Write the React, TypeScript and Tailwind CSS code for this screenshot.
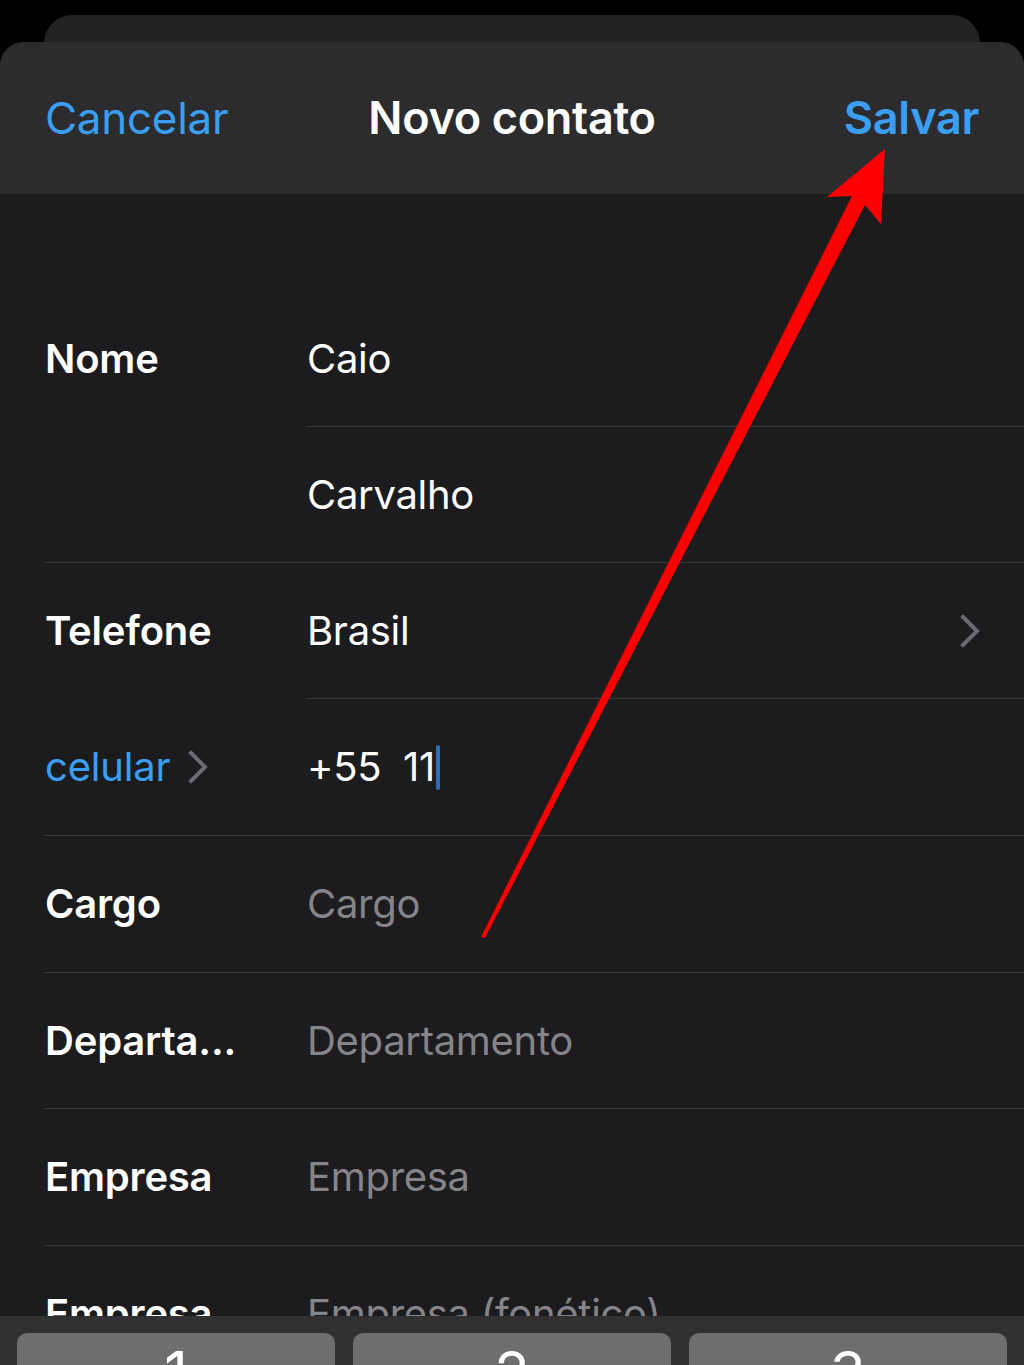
import React from "react";

const font = { fontFamily: "Inter, 'Noto Sans', sans-serif" };

function Chevron({ className }: { className?: string }) {
  return (
    <svg className={className} viewBox="0 0 20 34" fill="none">
      <path d="M3 3 L17 17 L3 31" stroke="#6c6c70" strokeWidth="4" strokeLinecap="square" strokeLinejoin="miter" />
    </svg>
  );
}

type Row = {
  h: string;
  label?: React.ReactNode;
  value: React.ReactNode;
  last?: boolean;
  right?: React.ReactNode;
};

export default function App() {
  const rows: Row[] = [
    { h: "h-[136px]", label: "Nome", value: <span className="text-white">Caio</span> },
    { h: "h-[136px]", value: <span className="text-white">Carvalho</span>, last: true },
    {
      h: "h-[136px]",
      label: "Telefone",
      value: <span className="text-white">Brasil</span>,
      right: <Chevron className="w-[20px] h-[34px] mr-[44px]" />,
    },
    {
      h: "h-[137px]",
      label: (
        <span className="flex items-center gap-[18px] font-normal text-[#3a9ff2]">
          celular
          <Chevron className="w-[20px] h-[34px]" />
        </span>
      ),
      value: (
        <span className="flex items-center text-white whitespace-pre">
          {"+55  11"}
          <span className="inline-block w-[4px] h-[45px] rounded-full bg-[#2f6cb5] ml-[1px]" />
        </span>
      ),
      last: true,
    },
    { h: "h-[137px]", label: "Cargo", value: <span className="text-[#858589]">Cargo</span>, last: true },
    { h: "h-[136px]", label: "Departa...", value: <span className="text-[#858589]">Departamento</span>, last: true },
    { h: "h-[137px]", label: "Empresa", value: <span className="text-[#858589]">Empresa</span>, last: true },
    { h: "h-[136px]", label: "Empresa", value: <span className="text-[#858589]">Empresa (fonético)</span>, last: true },
  ];

  return (
    <div className="relative w-[1024px] h-[1365px] overflow-hidden bg-black flex flex-col" style={font}>
      <div className="pt-[15px] shrink-0">
        <div className="mx-[44px] h-[60px] rounded-t-[28px] bg-[#232323]" />
      </div>
      <div className="relative -mt-[33px] flex-1 min-h-0 flex flex-col overflow-hidden rounded-t-[24px] bg-[#1c1c1e]">
        <div className="h-[152px] shrink-0 bg-[#2c2c2e] grid grid-cols-[1fr_auto_1fr] items-center px-[45px] pb-[1px]">
          <span className="text-[44px] text-[#3a9ff2] tracking-[-0.3px] justify-self-start">Cancelar</span>
          <span className="text-[45px] font-semibold text-white tracking-[-0.3px]">Novo contato</span>
          <span className="text-[45px] font-semibold text-[#3a9ff2] tracking-[-0.3px] justify-self-end">Salvar</span>
        </div>
        <div className="flex-1 min-h-0 overflow-hidden pt-[97px]">
          {rows.map((r, i) => (
            <div
              key={i}
              className={`ml-[44px] flex items-stretch ${r.h} ${r.last ? "border-b border-[#38383a]" : ""}`}
            >
              <div className="w-[262px] shrink-0 flex items-center pl-[1px] text-[40px] font-semibold text-white tracking-[-0.2px]">
                {r.label}
              </div>
              <div
                className={`flex-1 flex items-center justify-between text-[40px] tracking-[-0.3px] ${
                  r.last ? "" : "border-b border-[#38383a]"
                }`}
              >
                <span className="pl-[1px]">{r.value}</span>
                {r.right}
              </div>
            </div>
          ))}
        </div>
      </div>
      <div className="h-[49px] shrink-0 bg-[#313131] pt-[17px] px-[17px] flex gap-[18px] overflow-hidden">
        {["1", "2", "3"].map((d) => (
          <div key={d} className="flex-1 h-[90px] rounded-[10px] bg-[#6e6e6e] flex justify-center pt-[10px]">
            <span className="text-[58px] leading-none text-white">{d}</span>
          </div>
        ))}
      </div>
      <svg className="absolute inset-0 pointer-events-none" width="1024" height="1365" viewBox="0 0 1024 1365">
        <polygon
          points="885,149 827,197 852,196 481,937 485,938 865,205 881,224"
          fill="#ff0000"
        />
      </svg>
    </div>
  );
}
